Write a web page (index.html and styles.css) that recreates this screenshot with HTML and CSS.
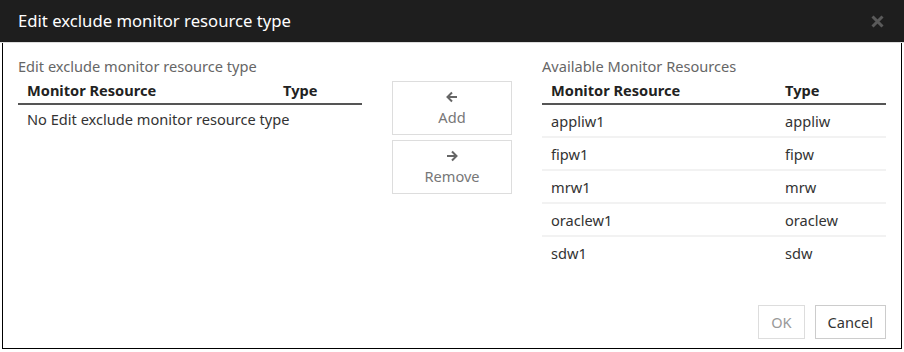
FILE: index.html
```html
<!DOCTYPE html>
<html>
<head>
<meta charset="utf-8">
<link rel="stylesheet" href="styles.css">
</head>
<body>
<div class="dialog">
  <div class="header">
    <span class="title">Edit exclude monitor resource type</span>
    <svg class="close" width="13" height="13" viewBox="0 0 13 13"><path d="M1.5 1.5 L11.5 11.5 M11.5 1.5 L1.5 11.5" stroke="#5a5a5a" stroke-width="3" fill="none"/></svg>
  </div>
  <div class="body">
    <div class="main">
      <div class="panel">
        <div class="label">Edit exclude monitor resource type</div>
        <table class="tbl left">
          <thead><tr><th class="c1">Monitor Resource</th><th>Type</th></tr></thead>
          <tbody><tr class="empty"><td colspan="2">No Edit exclude monitor resource type</td></tr></tbody>
        </table>
      </div>
      <div class="mid">
        <button class="mv">
          <svg class="arr" width="12" height="12" viewBox="0 0 12 12"><path d="M11 6 H1.5 M6 1.5 L1.5 6 L6 10.5" stroke="#666" stroke-width="2" fill="none"/></svg>
          <span>Add</span>
        </button>
        <button class="mv">
          <svg class="arr" width="12" height="12" viewBox="0 0 12 12"><path d="M1 6 H10.5 M6 1.5 L10.5 6 L6 10.5" stroke="#666" stroke-width="2" fill="none"/></svg>
          <span>Remove</span>
        </button>
      </div>
      <div class="panel">
        <div class="label">Available Monitor Resources</div>
        <table class="tbl right">
          <thead><tr><th class="c1">Monitor Resource</th><th>Type</th></tr></thead>
          <tbody>
            <tr><td>appliw1</td><td>appliw</td></tr>
            <tr><td>fipw1</td><td>fipw</td></tr>
            <tr><td>mrw1</td><td>mrw</td></tr>
            <tr><td>oraclew1</td><td>oraclew</td></tr>
            <tr><td>sdw1</td><td>sdw</td></tr>
          </tbody>
        </table>
      </div>
    </div>
    <div class="footer">
      <button class="btn disabled">OK</button>
      <button class="btn">Cancel</button>
    </div>
  </div>
</div>
</body>
</html>
```
FILE: styles.css
```css
html, body { margin: 0; padding: 0; background: #fff; }
body { width: 904px; height: 352px; overflow: hidden; font-family: "Noto Sans", "Open Sans", sans-serif; color: #333; }
.dialog { width: 904px; }
.header {
  background: #1e1e1e; border-bottom: 1px solid #ddd;
  display: flex; align-items: center; justify-content: space-between;
  padding: 0 20px 0 18px; box-sizing: border-box; height: 43px;
}
.title { color: #fff; font-size: 16.7px; position: relative; top: -1px; }
.close { display: block; }
.body {
  margin: 0 2px; border: 1px solid #000; border-top: 0;
  height: 306px; box-sizing: border-box; padding: 13px 15px 0 15px;
  display: flex; flex-direction: column;
}
.main { display: flex; align-items: flex-start; }
.panel { width: 344px; }
.label { color: #666; font-size: 14.6px; line-height: 20px; }
.tbl { width: 100%; border-collapse: collapse; font-size: 14.6px; }
.tbl th { text-align: left; font-weight: bold; color: #222; padding: 4px 9px 3px; border-bottom: 2px solid #555; line-height: 20px; }
.tbl th.c1 { width: 238px; }
.tbl td { padding: 4px 9px 6px; line-height: 20px; color: #333; }
.tbl.right th.c1 { width: 216px; }
.tbl.right tbody tr + tr td { border-top: 2px solid #f2f2f2; }
.tbl.right td { padding: 6px 9px 5px; }
.mid { width: 120px; margin: 25px 30px 0; display: flex; flex-direction: column; gap: 5px; }
.mv {
  height: 54px; border: 1px solid #ddd; background: #fff; color: #777;
  font-family: inherit; font-size: 14.6px; display: flex; flex-direction: column;
  align-items: center; justify-content: center; padding: 2px 0 0; line-height: 20px; gap: 4px;
}
.arr { display: block; }
.footer { margin-top: auto; margin-bottom: 9px; display: flex; justify-content: flex-end; gap: 10px; }
.btn {
  height: 34px; border: 1px solid #ccc; background: #fff; color: #333;
  font-family: inherit; font-size: 14.6px; padding: 0 12px;
}
.btn.disabled { color: #999; border-color: #ddd; }
```
